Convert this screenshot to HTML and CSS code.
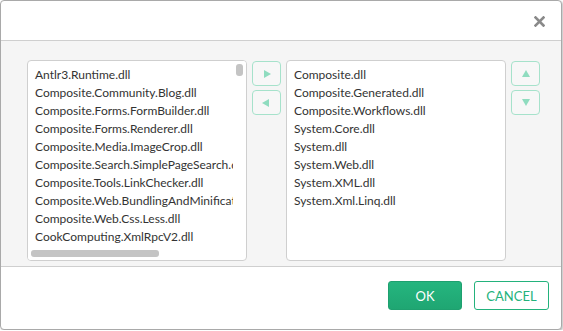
FILE: index.html
```html
<!DOCTYPE html>
<html lang="en">
<head>
  <meta charset="UTF-8" />
  <title>Assemblies</title>
  <link rel="stylesheet" href="styles.css">
</head>
<body>

<div class="dialog">
  <div class="dialog-head">
    <button class="close" title="Close">
      <svg width="11" height="11" viewBox="0 0 11 11">
        <path d="M1.5 1.5 L9.5 9.5 M9.5 1.5 L1.5 9.5" stroke="#8a8a8a" stroke-width="2.6" stroke-linecap="square"/>
      </svg>
    </button>
  </div>

  <div class="dialog-body">
    <div class="listbox listbox-source">
      <ul class="items">
        <li>Antlr3.Runtime.dll</li>
        <li>Composite.Community.Blog.dll</li>
        <li>Composite.Forms.FormBuilder.dll</li>
        <li>Composite.Forms.Renderer.dll</li>
        <li>Composite.Media.ImageCrop.dll</li>
        <li>Composite.Search.SimplePageSearch.dll</li>
        <li>Composite.Tools.LinkChecker.dll</li>
        <li>Composite.Web.BundlingAndMinification.dll</li>
        <li>Composite.Web.Css.Less.dll</li>
        <li>CookComputing.XmlRpcV2.dll</li>
      </ul>
      <div class="scroll-v"><span class="thumb"></span></div>
      <div class="scroll-h"><span class="thumb"></span></div>
    </div>

    <div class="tools">
      <button class="tool"><span class="tri tri-right"></span></button>
      <button class="tool"><span class="tri tri-left"></span></button>
    </div>

    <div class="listbox">
      <ul class="items">
        <li>Composite.dll</li>
        <li>Composite.Generated.dll</li>
        <li>Composite.Workflows.dll</li>
        <li>System.Core.dll</li>
        <li>System.dll</li>
        <li>System.Web.dll</li>
        <li>System.XML.dll</li>
        <li>System.Xml.Linq.dll</li>
      </ul>
    </div>

    <div class="tools">
      <button class="tool"><span class="tri tri-up"></span></button>
      <button class="tool"><span class="tri tri-down"></span></button>
    </div>
  </div>

  <div class="dialog-foot">
    <button class="btn btn-ok">OK</button>
    <button class="btn btn-cancel">CANCEL</button>
  </div>
</div>

</body>
</html>
```

FILE: styles.css
```css
:root {
  --green: #23b27c;
  --green-light: #a6e2cb;
  --line: #cfcfcf;
  --text: #333;
}
* {
  box-sizing: border-box;
}
body {
  margin: 0;
  font-family: Lato, 'Open Sans', sans-serif;
  font-size: 12px;
  color: var(--text);
  background: #fff;
}
button {
  font-family: inherit;
  cursor: pointer;
}
.dialog {
  width: 562px;
  height: 330px;
  border: 1px solid #a9a9a9;
  border-radius: 4px;
  box-shadow: 1px 1px 2px rgba(0,0,0,0.25);
  display: flex;
  flex-direction: column;
  overflow: hidden;
  background: #fff;
}
.dialog-head {
  height: 40px;
  border-bottom: 1px solid var(--line);
  display: flex;
  justify-content: flex-end;
  align-items: center;
  padding: 2px 16px 0 0;
}
.close {
  border: none;
  background: none;
  padding: 0;
  line-height: 0;
}
.dialog-body {
  height: 226px;
  background: #f5f5f5;
  border-bottom: 1px solid var(--line);
  display: flex;
  align-items: flex-start;
  padding: 19px 0 0 26px;
  gap: 5px;
}
.listbox {
  position: relative;
  width: 220px;
  height: 201px;
  background: #fff;
  border: 1px solid var(--line);
  border-radius: 4px;
  overflow: hidden;
}
.items {
  list-style: none;
  margin: 0;
  padding: 5px 0 0 7px;
  white-space: nowrap;
}
.items li {
  height: 18px;
  line-height: 18px;
}
.listbox-source .items {
  width: 205px;
  overflow: hidden;
}
.scroll-v {
  position: absolute;
  top: 0;
  right: 0;
  width: 13px;
  height: 186px;
  background: #fff;
}
.scroll-v .thumb {
  position: absolute;
  top: 3px;
  left: 3px;
  width: 7px;
  height: 12px;
  border-radius: 3px;
  background: #c4c4c4;
}
.scroll-h {
  position: absolute;
  left: 0;
  bottom: 0;
  width: 205px;
  height: 13px;
  background: #fff;
}
.scroll-h .thumb {
  position: absolute;
  left: 3px;
  top: 3px;
  width: 128px;
  height: 7px;
  border-radius: 3px;
  background: #c4c4c4;
}
.tools {
  display: flex;
  flex-direction: column;
  gap: 4px;
  padding-top: 1px;
}
.tool {
  width: 29px;
  height: 25px;
  border: 1px solid var(--green-light);
  border-radius: 4px;
  background: #f7f7f7;
  display: flex;
  align-items: center;
  justify-content: center;
  padding: 0;
}
.tri {
  width: 0;
  height: 0;
  border: 4px solid transparent;
}
.tri-right {
  border-left: 7px solid #8fdcbf;
  border-right: none;
  margin-left: 2px;
}
.tri-left {
  border-right: 7px solid #8fdcbf;
  border-left: none;
  margin-right: 2px;
}
.tri-up {
  border-bottom: 7px solid #8fdcbf;
  border-top: none;
}
.tri-down {
  border-top: 7px solid #8fdcbf;
  border-bottom: none;
}
.dialog-foot {
  flex: 1;
  display: flex;
  justify-content: flex-end;
  align-items: flex-start;
  padding: 14px 12px 0 0;
  gap: 12px;
}
.btn {
  height: 29px;
  border-radius: 3px;
  font-size: 13px;
  padding: 0;
}
.btn-ok {
  width: 74px;
  border: 1px solid #1ea06f;
  background: linear-gradient(#25b57f, #1fa672);
  color: #fff;
}
.btn-cancel {
  width: 75px;
  border: 1px solid var(--green);
  background: #fff;
  color: var(--green);
}
```
